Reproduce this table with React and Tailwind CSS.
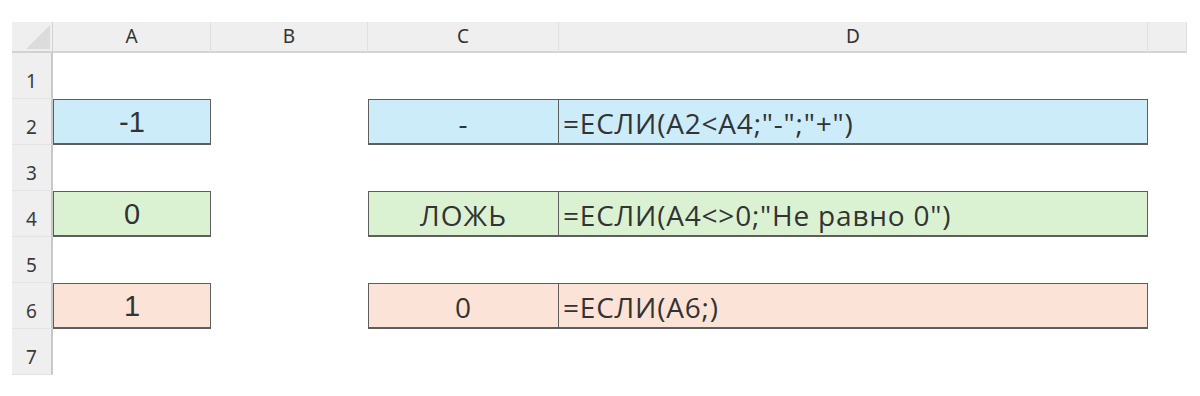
import React from 'react';

const cols = ['A', 'B', 'C', 'D', ''];

// строки таблицы: значение в A, результат в C, формула в D
const rows = [
  { n: 1 },
  { n: 2, a: '-1', c: '-', d: '=ЕСЛИ(A2<A4;"-";"+")', bg: 'bg-[#ccecfa]' },
  { n: 3 },
  { n: 4, a: '0', c: 'ЛОЖЬ', d: '=ЕСЛИ(A4<>0;"Не равно 0")', bg: 'bg-[#dbf2d2]' },
  { n: 5 },
  { n: 6, a: '1', c: '0', d: '=ЕСЛИ(A6;)', bg: 'bg-[#fbe3d7]' },
  { n: 7 },
];

const ubuntuLike = { fontFamily: '"Open Sans", "Noto Sans", sans-serif' };

const App = () => {
  return (
    <div className="w-[1200px] h-[396px] bg-white pl-3 pt-[22px]">
      <div className="grid grid-cols-[41px_158px_157px_191px_589px_39px] grid-rows-[31px_repeat(7,46px)] w-[1175px]">
        {/* угол */}
        <div className="bg-[#efefef] border-r border-b-2 border-[#d2d2d2] relative">
          <svg className="absolute right-[2px] bottom-[2px]" width="24" height="24" viewBox="0 0 24 24">
            <polygon points="24,0 24,24 0,24" fill="#dcdcdc" />
          </svg>
        </div>
        {cols.map((c, i) => (
          <div
            key={i}
            className="bg-[#efefef] border-b-2 border-[#d4d4d4] border-r border-r-[#e0e0e0] flex items-center justify-center text-[19px] text-[#333] font-['Noto_Sans',sans-serif]"
          >
            {c}
          </div>
        ))}

        {rows.map((r) => (
          <React.Fragment key={r.n}>
            <div className="bg-[#efefef] border-r-2 border-r-[#c9c9c9] border-b border-b-[#e3e3e3] flex items-end justify-center pb-[3px] text-[19px] text-[#3a3a3a] font-['Noto_Sans',sans-serif]">
              {r.n}
            </div>
            {r.a ? (
              <>
                <div className={`${r.bg} border border-[#5e5e5e] border-b-2 flex items-center justify-center text-[29px] text-[#333] font-['Liberation_Sans',Arial,sans-serif] pt-[2px]`}>
                  {r.a}
                </div>
                <div />
                <div className={`${r.bg} border border-[#5e5e5e] border-b-2 flex items-center justify-center text-[28px] tracking-[1px] text-[#333] pt-[3px]`} style={ubuntuLike}>
                  {r.c}
                </div>
                <div className={`${r.bg} border border-l-0 border-[#5e5e5e] border-b-2 flex items-center pl-1 text-[28px] tracking-[0.8px] text-[#333] pt-[3px] whitespace-nowrap`} style={ubuntuLike}>
                  {r.d}
                </div>
                <div />
              </>
            ) : (
              <>
                <div />
                <div />
                <div />
                <div />
                <div />
              </>
            )}
          </React.Fragment>
        ))}
      </div>
    </div>
  );
};

export default App;
